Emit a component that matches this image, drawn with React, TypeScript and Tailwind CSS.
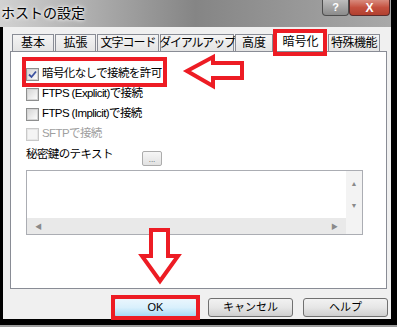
import React from "react";

const tabs = [
  { label: "基本", w: "w-[42px]", t: "" },
  { label: "拡張", w: "w-[41px]", t: "" },
  { label: "文字コード", w: "w-[62px]", t: "tracking-[-1px]" },
  { label: "ダイアルアップ", w: "w-[74px]", t: "text-[11px] tracking-[-1.2px]" },
  { label: "高度", w: "w-[38px]", t: "" },
  { label: "暗号化", w: "w-[53px]", t: "", active: true },
  { label: "特殊機能", w: "w-[52px]", t: "tracking-[-0.5px]" },
];

function Check({ checked, disabled }: { checked?: boolean; disabled?: boolean }) {
  return (
    <div
      className={
        "w-[13px] h-[13px] border flex items-center justify-center shrink-0 " +
        (disabled ? "border-[#c9c9c9] bg-[#f4f4f4]" : "border-[#8e8f8f] bg-white")
      }
    >
      <div
        className={
          "w-[11px] h-[11px] border flex items-center justify-center " +
          (disabled
            ? "border-[#e6e6e6] bg-[#f4f4f4]"
            : "border-[#d4d4d4] bg-gradient-to-br from-[#d7d7d7] to-[#fbfbfb]")
        }
      >
        {checked && (
          <svg width="9" height="9" viewBox="0 0 9 9">
            <path d="M1 4.5 L3.5 7 L8 1.5" stroke="#3c52a0" strokeWidth="1.8" fill="none" />
          </svg>
        )}
      </div>
    </div>
  );
}

function Row({ label, checked, disabled }: { label: string; checked?: boolean; disabled?: boolean }) {
  return (
    <div className="flex items-center h-[20px]">
      <Check checked={checked} disabled={disabled} />
      <span
        className={
          "ml-[3px] text-[11.5px] leading-none whitespace-nowrap tracking-[-0.6px] " +
          (disabled ? "text-[#a0a0a0]" : "text-black")
        }
      >
        {label}
      </span>
    </div>
  );
}

function Btn({ label, primary }: { label: string; primary?: boolean }) {
  return (
    <div
      className={
        "w-[85px] h-[19px] rounded-[3px] border flex items-center justify-center text-[11px] text-black " +
        (primary
          ? "border-[#3c7fb1] bg-gradient-to-b from-[#eaf6fd] via-[#d9f0fc] to-[#a7d9f5]"
          : "border-[#707070] bg-gradient-to-b from-[#f2f2f2] via-[#e6e6e6] to-[#cfcfcf]")
      }
    >
      {label}
    </div>
  );
}

export default function App() {
  return (
    <div className="relative w-[397px] h-[327px] bg-black overflow-hidden flex flex-col font-['Liberation_Sans','Noto_Sans_CJK_JP',sans-serif]">
      <div className="flex h-[319px]">
        <div className="w-[391px] flex flex-col">
          {/* title bar */}
          <div className="h-[27px] flex items-start bg-gradient-to-r from-[#d2d2d2] via-[#858585] to-[#a9a9a9]">
            <span className="ml-[1px] mt-[3px] text-[14px] text-black [text-shadow:0_0_5px_#fff,0_0_3px_#fff]">
              ホストの設定
            </span>
            <div className="ml-auto mr-[1px] flex">
              <div className="w-[27px] h-[16px] rounded-b-[4px] border border-t-0 border-[#4d4d4d] bg-gradient-to-b from-[#bdbdbd] to-[#8b8b8b] flex items-center justify-center text-[11px] font-bold text-white">
                ?
              </div>
              <div className="w-[41px] h-[16px] rounded-b-[4px] border border-t-0 border-[#5a2b2b] bg-gradient-to-b from-[#d88a7d] via-[#c4503f] to-[#b1402f] flex items-center justify-center text-[12px] font-bold text-white">
                X
              </div>
            </div>
          </div>
          {/* body */}
          <div className="flex-1 flex">
            <div className="w-[3px] bg-black" />
            <div className="flex-1 bg-[#f0f0f0] pl-[7px] pt-[4px] flex flex-col">
              <div className="flex items-end h-[20px] pl-[2px] gap-[1px]">
                {tabs.map((t) => (
                  <div
                    key={t.label}
                    className={
                      t.w +
                      " border border-b-0 border-[#898c95] flex items-center justify-center whitespace-nowrap text-[12px] leading-none " +
                      t.t +
                      (t.active
                        ? " h-[20px] bg-white text-black"
                        : " h-[17px] bg-gradient-to-b from-[#f4f4f4] to-[#e4e4e4] text-black")
                    }
                  >
                    {t.label}
                  </div>
                ))}
              </div>
              <div className="w-[377px] h-[238px] bg-white border border-[#898c95] pl-[15px] pt-[12px]">
                <Row label="暗号化なしで接続を許可" checked />
                <Row label="FTPS (Explicit)で接続" />
                <Row label="FTPS (Implicit)で接続" />
                <Row label="SFTPで接続" disabled />
                <div className="flex items-center h-[20px] mt-[1px]">
                  <span className="text-[11.5px] tracking-[-0.6px] text-black w-[116px]">秘密鍵のテキスト</span>
                  <div className="w-[20px] h-[15px] mt-[6px] rounded-[2px] border border-[#acacac] bg-gradient-to-b from-[#f6f6f6] to-[#e2e2e2] flex items-end justify-center text-[8px] leading-[10px] text-[#555]">
                    ...
                  </div>
                </div>
                <div className="mt-[5px] w-[337px] h-[65px] border border-[#abadb3] flex flex-col">
                  <div className="flex-1 flex">
                    <div className="flex-1 bg-white" />
                    <div className="w-[16px] bg-[#f3f3f3] flex flex-col items-center justify-between py-[9px] text-[7px] leading-none text-[#8a8a8a]">
                      <span>▲</span>
                      <span>▼</span>
                    </div>
                  </div>
                  <div className="h-[16px] flex">
                    <div className="flex-1 bg-[#e9e9e9] flex items-center justify-between px-[8px] text-[7px] leading-none text-[#8a8a8a]">
                      <span>◀</span>
                      <span>▶</span>
                    </div>
                    <div className="w-[16px] bg-[#f3f3f3]" />
                  </div>
                </div>
              </div>
              <div className="flex justify-end gap-[10px] pr-[3px] mt-[9px]">
                <Btn label="OK" primary />
                <Btn label="キャンセル" />
                <Btn label="ヘルプ" />
              </div>
            </div>
          </div>
        </div>
      </div>
      <div className="h-[6px] bg-black" />
      <div className="h-[2px] bg-[#9c9c9c]" />

      {/* annotations */}
      <div className="absolute left-[273px] top-[29px] w-[54px] h-[27px] border-4 border-[#ed1c24]" />
      <div className="absolute left-[22px] top-[57px] w-[145px] h-[30px] border-4 border-[#ed1c24]" />
      <div className="absolute left-[111px] top-[295px] w-[89px] h-[25px] border-4 border-[#ed1c24]" />
      <svg className="absolute left-0 top-0 pointer-events-none" width="397" height="327">
        <polygon
          points="187,71 213,57 213,63 242,63 242,78 213,78 213,86"
          fill="white"
          stroke="#ed1c24"
          strokeWidth="4"
          strokeLinejoin="miter"
        />
        <polygon
          points="151,230 168,230 168,256 178,256 160,281 142,256 151,256"
          fill="white"
          stroke="#ed1c24"
          strokeWidth="4"
        />
      </svg>
    </div>
  );
}
